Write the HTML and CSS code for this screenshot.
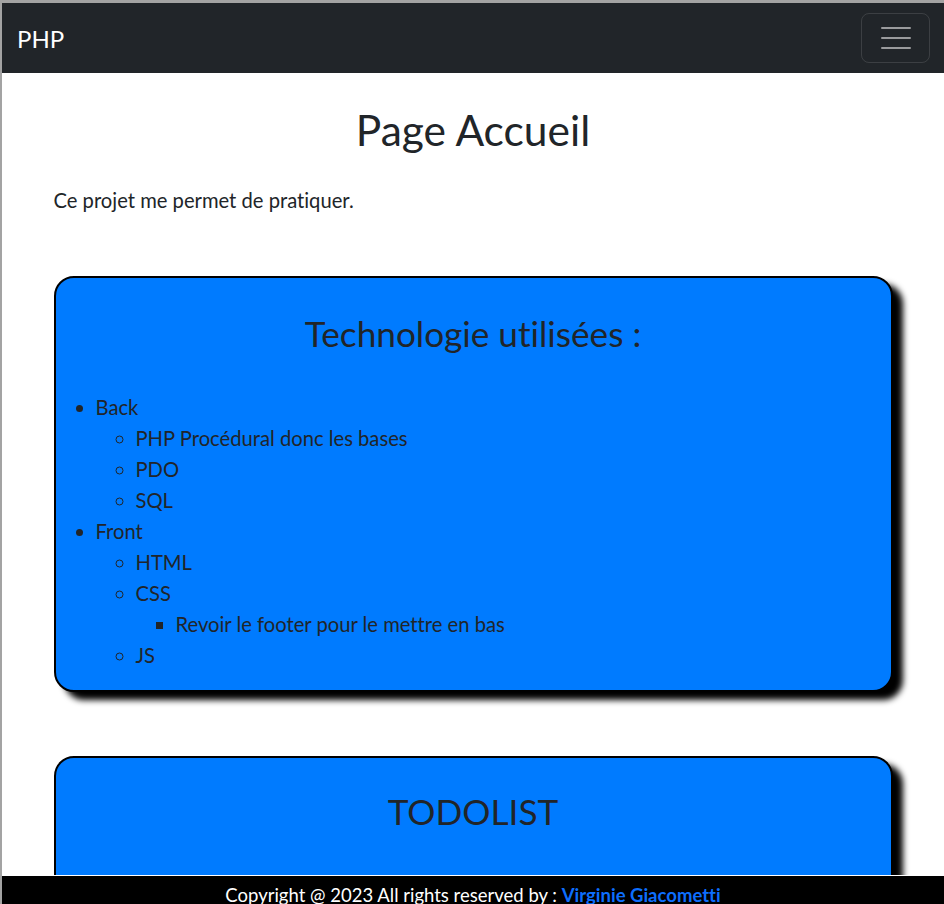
FILE: index.html
```html
<!DOCTYPE html>
<html lang="fr">
<head>
<meta charset="utf-8">
<title>PHP</title>
<link rel="stylesheet" href="styles.css">
</head>
<body>
<nav class="navbar">
  <a class="brand" href="#">PHP</a>
  <button class="toggler" type="button" aria-label="Menu">
    <span class="bar"></span><span class="bar"></span><span class="bar"></span>
  </button>
</nav>
<main class="container">
  <h1 class="title">Page Accueil</h1>
  <p class="intro">Ce projet me permet de pratiquer.</p>

  <section class="card">
    <h2 class="card-title">Technologie utilisées :</h2>
    <ul class="list">
      <li>Back
        <ul class="sub">
          <li>PHP Procédural donc les bases</li>
          <li>PDO</li>
          <li>SQL</li>
        </ul>
      </li>
      <li>Front
        <ul class="sub">
          <li>HTML</li>
          <li>CSS
            <ul class="subsub">
              <li>Revoir le footer pour le mettre en bas</li>
            </ul>
          </li>
          <li>JS</li>
        </ul>
      </li>
    </ul>
  </section>

  <section class="card card-todo">
    <h2 class="card-title">TODOLIST</h2>
    <ul class="list">
      <li>Back</li>
      <li>Front</li>
    </ul>
  </section>
</main>
<footer class="footer">
  Copyright @ 2023 All rights reserved by : <a class="author" href="#">Virginie Giacometti</a>
</footer>
</body>
</html>
```
FILE: styles.css
```css
html, body {
  margin: 0;
  padding: 0;
}
body {
  font-family: Lato, "Liberation Sans", sans-serif;
  font-variant-ligatures: none;
  color: #212529;
  background: #fff;
  border-top: 3px solid #a3a3a3;
  border-left: 2px solid #a3a3a3;
  min-height: 901px;
  box-sizing: border-box;
}
.navbar {
  height: 70px;
  background: #212529;
  display: flex;
  align-items: center;
  justify-content: space-between;
  padding: 0 14px 0 15px;
}
.brand {
  color: #fff;
  text-decoration: none;
  font-size: 24px;
}
.toggler {
  width: 69px;
  height: 50px;
  border: 1px solid rgba(255,255,255,0.12);
  border-radius: 8px;
  background: transparent;
  display: flex;
  flex-direction: column;
  align-items: center;
  justify-content: center;
  gap: 8px;
  padding: 0;
}
.bar {
  display: block;
  width: 30px;
  height: 2px;
  background: #9a9b9d;
  border-radius: 1px;
}
.container {
  width: 839px;
  margin: 0 auto;
  padding-bottom: 60px;
}
.title {
  font-size: 42.5px;
  font-weight: 400;
  text-align: center;
  line-height: 60px;
  margin: 27px 0 25px;
}
.intro {
  font-size: 20.2px;
  line-height: 30px;
  margin: 0 0 61px;
}
.card {
  background: #007bff;
  border: 2px solid #000;
  border-radius: 20px;
  box-shadow: 10px 8px 6px #000;
  padding: 31px 0 19px;
  margin-bottom: 64px;
}
.card-title {
  font-size: 35.2px;
  font-weight: 400;
  text-align: center;
  line-height: 48px;
  margin: 0 0 35px;
}
.card-todo {
  padding-top: 29px;
}
.list {
  font-size: 20.2px;
  line-height: 31px;
  margin: 0;
  padding-left: 40px;
  list-style: disc;
}
.sub {
  margin: 0;
  padding-left: 40px;
  list-style: circle;
}
.subsub {
  margin: 0;
  padding-left: 40px;
  list-style: square;
}
.footer {
  position: fixed;
  left: 2px;
  right: 0;
  bottom: 0;
  height: 28px;
  background: #000;
  border-top: 1px solid #fff;
  color: #fff;
  text-align: center;
  font-size: 18.5px;
  line-height: 38px;
  overflow: hidden;
}
.author {
  color: #0d6efd;
  font-weight: 700;
  text-decoration: none;
}
```
